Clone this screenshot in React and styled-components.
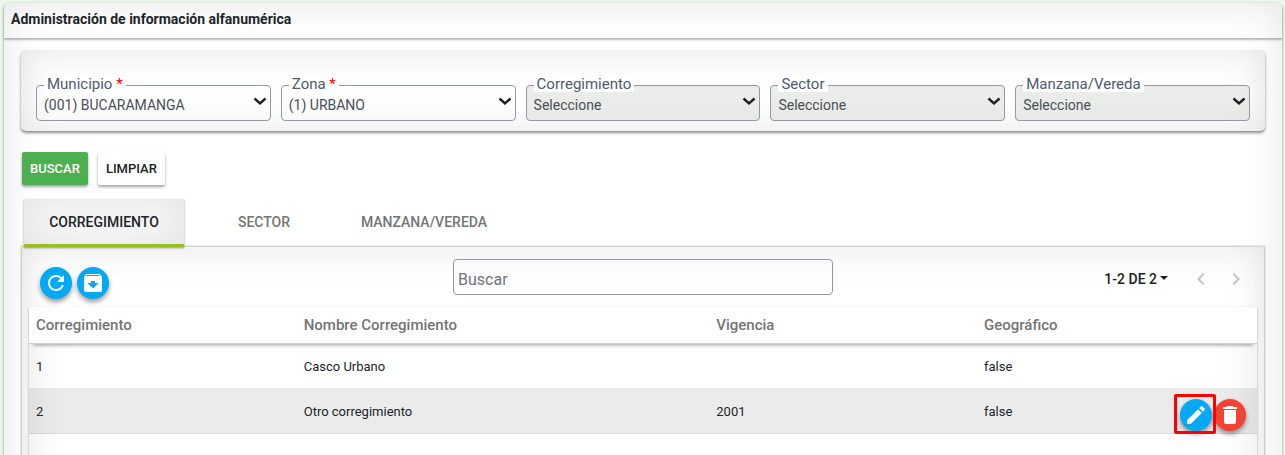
import styled, { createGlobalStyle, css } from "styled-components";
import {
  MdArchive,
  MdChevronLeft,
  MdChevronRight,
  MdDelete,
  MdEdit,
  MdRefresh,
} from "react-icons/md";

const filters = [
  { id: "municipio", label: "Municipio", value: "(001) BUCARAMANGA", required: true },
  { id: "zona", label: "Zona", value: "(1) URBANO", required: true },
  { id: "corregimiento", label: "Corregimiento", value: "Seleccione", disabled: true },
  { id: "sector", label: "Sector", value: "Seleccione", disabled: true },
  { id: "manzana", label: "Manzana/Vereda", value: "Seleccione", disabled: true },
];

const tabs = ["CORREGIMIENTO", "SECTOR", "MANZANA/VEREDA"];

const rows = [
  { codigo: "1", nombre: "Casco Urbano", vigencia: "", geografico: "false" },
  { codigo: "2", nombre: "Otro corregimiento", vigencia: "2001", geografico: "false", active: true },
];

const App = () => {
  return (
    <Page>
      <GlobalStyle />
      <Card>
        <CardHeader>
          <h1>Administración de información alfanumérica</h1>
        </CardHeader>
        <CardBody>
          <Filters>
            {filters.map((filter) => (
              <Field key={filter.id}>
                <label htmlFor={filter.id}>
                  {filter.label}
                  {filter.required && <em> *</em>}
                </label>
                <select id={filter.id} disabled={filter.disabled}>
                  <option>{filter.value}</option>
                </select>
                <svg viewBox="0 0 14 9" aria-hidden="true">
                  <path d="M1.5 1.5l5.5 5 5.5-5" />
                </svg>
              </Field>
            ))}
          </Filters>
          <Buttons>
            <Button $primary>BUSCAR</Button>
            <Button>LIMPIAR</Button>
          </Buttons>
          <Tabs role="tablist">
            {tabs.map((tab, i) => (
              <Tab key={tab} role="tab" aria-selected={i === 0} $active={i === 0}>
                {tab}
              </Tab>
            ))}
          </Tabs>
          <Panel>
            <Toolbar>
              <Actions $gap={5}>
                <RoundButton aria-label="Actualizar">
                  <MdRefresh />
                </RoundButton>
                <RoundButton aria-label="Descargar">
                  <MdArchive />
                </RoundButton>
              </Actions>
              <Search placeholder="Buscar" aria-label="Buscar" />
              <Pager>
                <PageRange>
                  1-2 DE 2
                  <svg viewBox="0 0 8 4" aria-hidden="true">
                    <path d="M0 0h8L4 4z" />
                  </svg>
                </PageRange>
                <PageButton disabled aria-label="Anterior">
                  <MdChevronLeft />
                </PageButton>
                <PageButton disabled aria-label="Siguiente">
                  <MdChevronRight />
                </PageButton>
              </Pager>
            </Toolbar>
            <TableBox>
              <Table>
                <colgroup>
                  <col style={{ width: "21.8%" }} />
                  <col style={{ width: "33.6%" }} />
                  <col style={{ width: "21.8%" }} />
                  <col />
                  <col style={{ width: "90px" }} />
                </colgroup>
                <thead>
                  <tr>
                    <th>Corregimiento</th>
                    <th>Nombre Corregimiento</th>
                    <th>Vigencia</th>
                    <th>Geográfico</th>
                    <th />
                  </tr>
                </thead>
                <tbody>
                  {rows.map((row) => (
                    <Row key={row.codigo} $active={row.active}>
                      <td>{row.codigo}</td>
                      <td>{row.nombre}</td>
                      <td>{row.vigencia}</td>
                      <td>{row.geografico}</td>
                      <ActionCell>
                        {row.active && (
                          <Actions $gap={2}>
                            <Marked>
                              <RoundButton aria-label="Editar">
                                <MdEdit />
                              </RoundButton>
                            </Marked>
                            <RoundButton $danger aria-label="Eliminar">
                              <MdDelete />
                            </RoundButton>
                          </Actions>
                        )}
                      </ActionCell>
                    </Row>
                  ))}
                </tbody>
              </Table>
            </TableBox>
          </Panel>
        </CardBody>
      </Card>
    </Page>
  );
};

export default App;

const GlobalStyle = createGlobalStyle`
  * {
    box-sizing: border-box;
  }
  body {
    margin: 0;
    background: #e9f8eb;
    color: #212529;
    font-family: Roboto, "Liberation Sans", sans-serif;
  }
  button, input, select {
    font-family: inherit;
    margin: 0;
  }
`;

const Page = styled.main`
  height: 100vh;
  padding: 3px 3px 0 4px;
  overflow: hidden;
`;

const Card = styled.section`
  background: #fff;
  border-radius: 5px;
  box-shadow: 0 1px 3px rgba(0, 0, 0, 0.4), inset 0 0 40px rgba(0, 0, 0, 0.1);
`;

const CardHeader = styled.header`
  height: 35px;
  padding: 6px 7px 0;
  border-radius: 5px 5px 0 0;
  box-shadow: 0 2px 2px rgba(0, 0, 0, 0.28);
  h1 {
    margin: 0;
    font-size: 14px;
    line-height: 20px;
    font-weight: 700;
  }
`;

const CardBody = styled.div`
  padding: 12px 17px 0;
`;

const Filters = styled.form`
  display: grid;
  grid-template-columns: repeat(5, 1fr);
  gap: 10px;
  padding: 35px 15px 10px;
  border-radius: 5px;
  box-shadow: 0 2px 3px rgba(0, 0, 0, 0.45), inset 0 0 40px rgba(0, 0, 0, 0.1);
`;

const Field = styled.div`
  position: relative;
  label {
    position: absolute;
    top: -8px;
    left: 8px;
    padding: 0 3px;
    background: #fff;
    color: #4d5b70;
    font-size: 15px;
    line-height: 15px;
    white-space: nowrap;
  }
  em {
    color: #f00;
    font-style: normal;
  }
  select {
    display: block;
    width: 100%;
    height: 36px;
    padding: 4px 28px 0 7px;
    appearance: none;
    border: 1px solid #8f99a8;
    border-radius: 4px;
    background: transparent;
    color: #495057;
    font-size: 14px;
    opacity: 1;
  }
  select:disabled {
    background: rgba(208, 216, 208, 0.45);
  }
  svg {
    position: absolute;
    top: 12px;
    right: 4px;
    width: 14px;
    height: 9px;
    fill: none;
    stroke: #1c1f24;
    stroke-width: 2.4;
    pointer-events: none;
  }
`;

const Buttons = styled.div`
  display: flex;
  gap: 10px;
  padding: 21px 1px 14px;
`;

const Button = styled.button`
  height: 33px;
  padding: 0 8px;
  border: 0;
  border-radius: 2px;
  background: ${({ $primary }) => ($primary ? "#4caf50" : "#fff")};
  color: ${({ $primary }) => ($primary ? "#fff" : "#212121")};
  font-size: 13px;
  font-weight: 500;
  box-shadow: 0 2px 3px rgba(0, 0, 0, 0.36);
`;

const Tabs = styled.div`
  display: flex;
  padding: 0 3px;
`;

const Tab = styled.button`
  width: 160px;
  height: 48px;
  padding: 0;
  border: 0;
  border-bottom: 3px solid transparent;
  background: transparent;
  color: #757575;
  font-size: 14px;
  font-weight: 500;
  ${({ $active }) =>
    $active &&
    css`
      border-bottom-color: #95c11f;
      background: #fafafa;
      color: #212529;
      box-shadow: 0 1px 2px rgba(0, 0, 0, 0.4), inset 0 0 40px rgba(0, 0, 0, 0.1);
    `}
`;

const Panel = styled.section`
  margin: 0 1px;
  padding: 0 7px 8px;
  box-shadow: 0 0 2px 1px rgba(0, 0, 0, 0.25), inset 0 0 40px rgba(0, 0, 0, 0.1);
`;

const Toolbar = styled.div`
  display: grid;
  grid-template-columns: 1fr 380px 1fr;
  padding: 12px 11px 8px;
`;

const Actions = styled.div`
  display: flex;
  gap: ${({ $gap }) => $gap}px;
  padding-top: 8px;
`;

const RoundButton = styled.button`
  width: 32px;
  height: 32px;
  padding: 0;
  display: flex;
  align-items: center;
  justify-content: center;
  border: 0;
  border-radius: 50%;
  background: ${({ $danger }) => ($danger ? "#f44336" : "#03a9f4")};
  color: #fff;
  font-size: 24px;
  box-shadow: 0 3px 5px rgba(0, 0, 0, 0.4);
`;

const Search = styled.input`
  height: 36px;
  padding: 5px 4px 0;
  border: 1px solid #8f99a8;
  border-radius: 4px;
  background: transparent;
  font-size: 16px;
  &::placeholder {
    color: #6c757d;
    opacity: 1;
  }
`;

const Pager = styled.div`
  display: flex;
  justify-content: flex-end;
  align-items: center;
  height: 40px;
  margin-right: -7px;
`;

const PageRange = styled.button`
  display: flex;
  align-items: center;
  gap: 3px;
  margin-right: 15px;
  padding: 0;
  border: 0;
  background: transparent;
  color: #212121;
  font-size: 14px;
  font-weight: 500;
  svg {
    width: 8px;
    height: 4px;
    margin-bottom: 3px;
    fill: currentColor;
  }
`;

const PageButton = styled.button`
  width: 35px;
  height: 36px;
  padding: 0;
  border: 0;
  background: transparent;
  color: #c4c4c4;
  font-size: 24px;
  svg {
    display: block;
    margin: 0 auto;
  }
`;

const TableBox = styled.div`
  min-height: 300px;
  background: #fff;
  box-shadow: 0 1px 2px rgba(0, 0, 0, 0.35), inset 0 0 40px rgba(0, 0, 0, 0.1);
`;

const Table = styled.table`
  width: 100%;
  table-layout: fixed;
  border-spacing: 0;
  text-align: left;
  thead {
    background: #fff;
    box-shadow: 0 5px 4px -4px rgba(0, 0, 0, 0.4);
  }
  th {
    height: 37px;
    padding: 0 7px;
    border-bottom: 1px solid #d0d0d0;
    color: #757575;
    font-size: 15px;
    font-weight: 500;
  }
  td {
    height: 45px;
    padding: 0 7px;
    border-bottom: 1px solid rgba(0, 0, 0, 0.08);
    font-size: 13px;
  }
`;

const Row = styled.tr`
  background: ${({ $active }) => ($active ? "rgba(0, 0, 0, 0.08)" : "transparent")};
`;

const ActionCell = styled.td`
  && {
    vertical-align: bottom;
  }
  ${Actions} {
    justify-content: flex-end;
    padding: 8px 4px 2px 0;
  }
`;

const Marked = styled.div`
  position: relative;
  z-index: 1;
  &::after {
    content: "";
    position: absolute;
    inset: -5px -4px -3px -6px;
    border: 3px solid #f00;
    border-radius: 2px;
    pointer-events: none;
  }
`;
